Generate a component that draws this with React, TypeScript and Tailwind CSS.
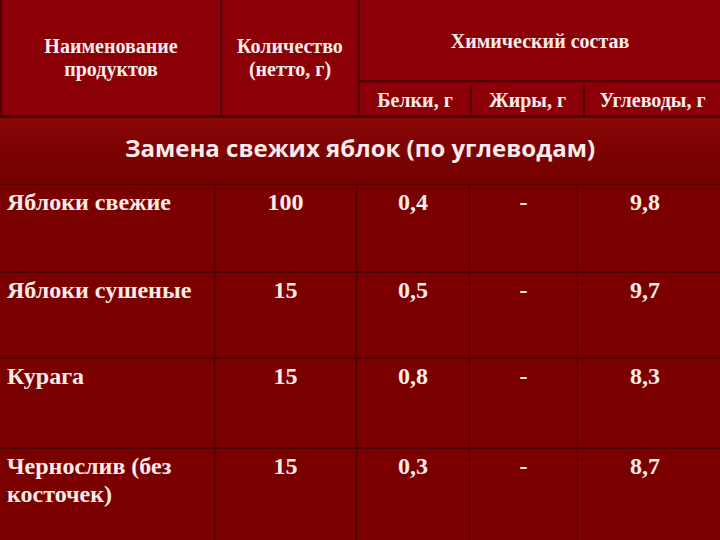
import React from "react";

const serif = { fontFamily: '"Liberation Serif", "Times New Roman", serif' };

const rows = [
  { name: "Яблоки свежие", q: "100", b: "0,4", f: "-", u: "9,8", h: "h-[88px]" },
  { name: "Яблоки сушеные", q: "15", b: "0,5", f: "-", u: "9,7", h: "h-[86px]" },
  { name: "Курага", q: "15", b: "0,8", f: "-", u: "8,3", h: "h-[90px]" },
  { name: "Чернослив (без косточек)", q: "15", b: "0,3", f: "-", u: "8,7", h: "flex-1" },
];

export default function App() {
  return (
    <div
      className="w-[720px] h-[540px] overflow-hidden bg-[#7a0000] flex flex-col text-[#fbecea] font-bold"
      style={serif}
    >
      {/* Header */}
      <div className="h-[118px] flex bg-[#8a0006] border-l-2 border-[#4a0000] border-b-[3px] border-b-[#520000]">
        <div className="w-[220px] flex items-center justify-center text-center text-[20px] leading-[23px] border-r-2 border-[#4a0000]">
          <div>
            Наименование
            <br />
            продуктов
          </div>
        </div>
        <div className="w-[138px] flex items-center justify-center text-center text-[20px] leading-[23px] border-r-2 border-[#4a0000]">
          <div>
            Количество
            <br />
            (нетто, г)
          </div>
        </div>
        <div className="flex-1 flex flex-col">
          <div className="h-[83px] flex items-center justify-center pt-[2px] text-[20px] border-b-2 border-[#4a0000]">
            Химический состав
          </div>
          <div className="flex-1 flex text-[20px] pt-[3px]">
            <div className="w-[112px] flex items-center justify-center border-r-2 border-[#4a0000]">Белки, г</div>
            <div className="w-[113px] flex items-center justify-center border-r-2 border-[#4a0000]">Жиры, г</div>
            <div className="flex-1 flex items-center justify-center">Углеводы, г</div>
          </div>
        </div>
      </div>

      {/* Title band */}
      <div className="h-[67px] flex items-center justify-center pb-[6px] bg-gradient-to-b from-[#8a0808] via-[#7c0202] to-[#740000] border-b border-[#4a0000]">
        <span
          className="text-[24px] font-bold text-[#fbeceb]"
          style={{ fontFamily: '"Open Sans", "DejaVu Sans", sans-serif' }}
        >
          Замена свежих яблок (по углеводам)
        </span>
      </div>

      {/* Data */}
      <div className="flex-1 flex flex-col text-[24px] leading-[28px]">
        {rows.map((r, i) => (
          <div
            key={i}
            className={`${r.h} flex ${i < rows.length - 1 ? "border-b-2 border-[#4a0000]" : ""}`}
          >
            <div className="w-[215px] pl-[7px] pt-[3px] border-r border-[#4a0000]">{r.name}</div>
            <div className="w-[142px] text-center pt-[3px] border-r border-[#4a0000]">{r.q}</div>
            <div className="w-[113px] text-center pt-[3px] border-r border-[#4a0000]">{r.b}</div>
            <div className="w-[108px] text-center pt-[3px] border-r border-[#4a0000]">{r.f}</div>
            <div className="flex-1 text-center pt-[3px] pr-[8px]">{r.u}</div>
          </div>
        ))}
      </div>
    </div>
  );
}
